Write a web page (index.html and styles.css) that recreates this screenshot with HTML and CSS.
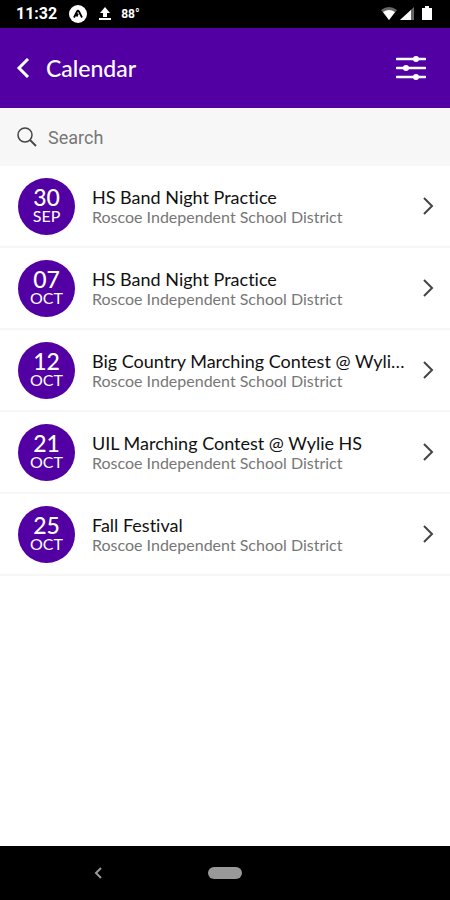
FILE: index.html
```html
<!DOCTYPE html>
<html lang="en">
<head>
  <meta charset="UTF-8">
  <meta name="viewport" content="width=device-width, initial-scale=1">
  <title>Calendar</title>
  <link rel="stylesheet" href="styles.css">
</head>
<body>

<div class="status-bar">
  <span class="time">11:32</span>
  <svg class="app-icon" width="18" height="18" viewBox="0 0 18 18">
    <circle cx="9" cy="9" r="9" fill="#fff"/>
    <path d="M5 12.5L8 6.5Q9 5 10 6.5L13 12.5M9 8.5L7.5 11.5" fill="none" stroke="#000" stroke-width="1.8"/>
  </svg>
  <svg class="upload-icon" width="12" height="14" viewBox="0 0 12 14">
    <path d="M6 0L11 6H8V10H4V6H1ZM0 11H12V13H0Z" fill="#fff"/>
  </svg>
  <span class="temp">88°</span>
  <svg class="signals" width="54" height="16" viewBox="0 0 54 16">
    <path d="M1 4Q9 -2 17 4L9 14Z" fill="#666"/>
    <path d="M3 6Q9 2 15 6L9 14Z" fill="#fff"/>
    <path d="M20 14L34 1V14Z" fill="#666"/>
    <path d="M20 14L31 4V14Z" fill="#fff"/>
    <path d="M42 2H45V0H49V2H52V14H42Z" fill="#fff"/>
  </svg>
</div>

<header>
  <button class="back" aria-label="Back">
    <svg width="14" height="20" viewBox="0 0 14 20">
      <path d="M12 1L3 10L12 19" fill="none" stroke="#fff" stroke-width="3"/>
    </svg>
  </button>
  <h1>Calendar</h1>
  <button class="filter" aria-label="Filter">
    <svg width="30" height="26" viewBox="0 0 30 26">
      <path d="M1 4H29M1 13H29M1 22H29" stroke="#fff" stroke-width="2.6" stroke-linecap="round"/>
      <circle cx="20" cy="4" r="3" fill="#fff"/>
      <circle cx="10" cy="13" r="3" fill="#fff"/>
      <circle cx="20" cy="22" r="3" fill="#fff"/>
    </svg>
  </button>
</header>

<div class="search">
  <svg width="20" height="20" viewBox="0 0 20 20">
    <circle cx="8" cy="8" r="7" fill="none" stroke="#444" stroke-width="1.5"/>
    <path d="M13 13L19 19" stroke="#444" stroke-width="1.8"/>
  </svg>
  <input type="text" placeholder="Search" aria-label="Search">
</div>

<main>
  <a class="event" href="#">
    <span class="date"><span class="day">30</span><span class="month">SEP</span></span>
    <span class="info"><span class="title">HS Band Night Practice</span><span class="place">Roscoe Independent School District</span></span>
    <svg class="arrow" width="12" height="18" viewBox="0 0 12 18"><path d="M2 1L10 9L2 17"/></svg>
  </a>
  <a class="event" href="#">
    <span class="date"><span class="day">07</span><span class="month">OCT</span></span>
    <span class="info"><span class="title">HS Band Night Practice</span><span class="place">Roscoe Independent School District</span></span>
    <svg class="arrow" width="12" height="18" viewBox="0 0 12 18"><path d="M2 1L10 9L2 17"/></svg>
  </a>
  <a class="event" href="#">
    <span class="date"><span class="day">12</span><span class="month">OCT</span></span>
    <span class="info"><span class="title">Big Country Marching Contest @ Wylie HS</span><span class="place">Roscoe Independent School District</span></span>
    <svg class="arrow" width="12" height="18" viewBox="0 0 12 18"><path d="M2 1L10 9L2 17"/></svg>
  </a>
  <a class="event" href="#">
    <span class="date"><span class="day">21</span><span class="month">OCT</span></span>
    <span class="info"><span class="title">UIL Marching Contest @ Wylie HS</span><span class="place">Roscoe Independent School District</span></span>
    <svg class="arrow" width="12" height="18" viewBox="0 0 12 18"><path d="M2 1L10 9L2 17"/></svg>
  </a>
  <a class="event" href="#">
    <span class="date"><span class="day">25</span><span class="month">OCT</span></span>
    <span class="info"><span class="title">Fall Festival</span><span class="place">Roscoe Independent School District</span></span>
    <svg class="arrow" width="12" height="18" viewBox="0 0 12 18"><path d="M2 1L10 9L2 17"/></svg>
  </a>
</main>

<nav>
  <button class="nav-back" aria-label="System back">
    <svg width="10" height="14" viewBox="0 0 10 14">
      <path d="M8 2L3 7L8 12" fill="none" stroke="#999" stroke-width="2"/>
    </svg>
  </button>
  <button class="home" aria-label="Home"></button>
</nav>

</body>
</html>
```
FILE: styles.css
```css
* {
  box-sizing: border-box;
}

body {
  margin: 0;
  min-height: 100vh;
  display: flex;
  flex-direction: column;
  background: #fff;
  font-family: Lato, sans-serif;
  font-variant-ligatures: none;
}

button {
  padding: 0;
  border: none;
  background: none;
  display: flex;
  cursor: pointer;
}

.status-bar {
  height: 28px;
  padding: 0 16px;
  display: flex;
  align-items: center;
  background: #000;
  color: #fff;
  font-family: Roboto, sans-serif;
  font-weight: bold;
}

.time {
  font-size: 16px;
  line-height: 20px;
}

.app-icon {
  margin-left: 12px;
}

.upload-icon {
  margin: 0 10px 0 12px;
}

.temp {
  font-size: 12px;
  line-height: 20px;
}

.signals {
  margin-left: auto;
}

header {
  height: 80px;
  padding: 0 24px 0 16px;
  display: flex;
  align-items: center;
  background: #5200a3;
  color: #fff;
}

h1 {
  flex: 1;
  margin: 0 0 0 16px;
  font-size: 23px;
  line-height: 28px;
  font-weight: 500;
}

.search {
  height: 58px;
  padding: 0 17px;
  display: flex;
  align-items: center;
  gap: 11px;
  background: #f7f7f7;
}

.search input {
  flex: 1;
  min-width: 0;
  padding: 0;
  border: none;
  outline: none;
  background: none;
  font-family: Roboto, sans-serif;
  font-size: 18px;
}

.search input::placeholder {
  color: #777;
}

.event {
  height: 82px;
  padding: 0 16px 0 18px;
  display: flex;
  align-items: center;
  border-bottom: 2px solid #f6f6f6;
  color: #111;
  text-decoration: none;
}

.date {
  flex: none;
  width: 57px;
  height: 57px;
  display: flex;
  flex-direction: column;
  align-items: center;
  justify-content: center;
  border-radius: 50%;
  background: #5200a3;
  color: #fff;
}

.day {
  font-size: 23px;
  line-height: 20px;
  font-weight: 500;
}

.month {
  font-size: 16px;
  line-height: 18px;
}

.info {
  flex: 1;
  min-width: 0;
  margin: 0 14px 0 17px;
  display: flex;
  flex-direction: column;
}

.title {
  font-size: 18px;
  line-height: 22px;
  white-space: nowrap;
  overflow: hidden;
  text-overflow: ellipsis;
}

.place {
  font-size: 16px;
  line-height: 18px;
  color: #777;
}

.arrow {
  flex: none;
  fill: none;
  stroke: #444;
  stroke-width: 2;
}

nav {
  height: 54px;
  margin-top: auto;
  display: grid;
  grid-template-columns: 1fr 34px 1fr;
  align-items: center;
  background: #000;
}

.nav-back {
  justify-self: center;
  margin-right: 12px;
}

.home {
  height: 12px;
  border-radius: 6px;
  background: #999;
}
```
